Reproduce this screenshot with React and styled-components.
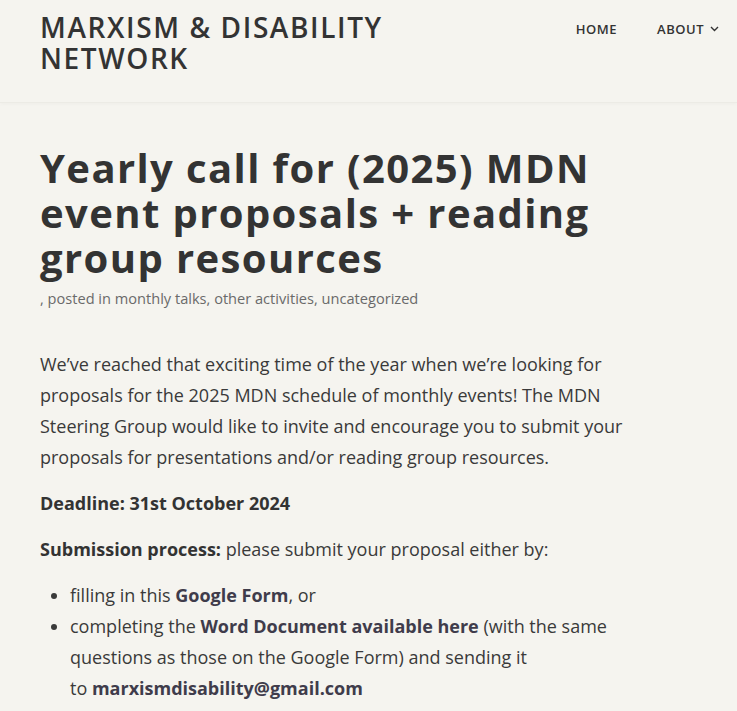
import React from "react";
import styled, { createGlobalStyle } from "styled-components";

const GlobalStyle = createGlobalStyle`
  html, body {
    margin: 0;
    padding: 0;
    background: #f5f4ef;
  }
  body {
    font-family: "Open Sans", "Liberation Sans", sans-serif;
    color: #333;
  }
`;

const Header = styled.header`
  display: flex;
  justify-content: space-between;
  align-items: flex-start;
  padding: 12px 18px 28px 40px;
  border-bottom: 1px solid #ecebe5;
  box-shadow: 0 1px 4px rgba(0, 0, 0, 0.03);
`;

const SiteTitle = styled.a`
  font-size: 28px;
  font-weight: 600;
  letter-spacing: 1.6px;
  line-height: 31px;
  text-transform: uppercase;
  color: #333;
  text-decoration: none;
  width: 380px;
`;

const Nav = styled.nav`
  display: flex;
  gap: 40px;
  padding-top: 8px;
`;

const NavItem = styled.a`
  display: flex;
  align-items: center;
  gap: 6px;
  font-size: 13px;
  font-weight: 600;
  letter-spacing: 0.5px;
  text-transform: uppercase;
  color: #333;
  text-decoration: none;
`;

const Main = styled.main`
  padding: 42px 40px 0 40px;
`;

const Title = styled.h1`
  margin: 0;
  font-size: 40px;
  font-weight: 700;
  line-height: 45px;
  letter-spacing: 1.4px;
  color: #333;
  max-width: 620px;
`;

const Meta = styled.div`
  margin-top: 8px;
  font-size: 14.6px;
  color: #6a6a6a;
`;

const Body = styled.div`
  margin-top: 41px;
  font-size: 18px;
  line-height: 31px;
  color: #3a3a3a;
  max-width: 620px;
`;

const Para = styled.p`
  margin: 0 0 15px;
`;

const Strong = styled.strong`
  font-weight: 700;
  color: ${(p) => (p.$link ? "#3f3c4b" : "#333")};
`;

const List = styled.ul`
  margin: 0;
  padding-left: 30px;
`;

const Item = styled.li`
  padding-left: 0;
`;

function Chevron() {
  return (
    <svg width="9" height="6" viewBox="0 0 9 6" fill="none">
      <path d="M1 1l3.5 3.5L8 1" stroke="#333" strokeWidth="1.4" />
    </svg>
  );
}

export default function App() {
  return (
    <>
      <GlobalStyle />
      <Header>
        <SiteTitle href="#">Marxism &amp; Disability Network</SiteTitle>
        <Nav>
          <NavItem href="#">Home</NavItem>
          <NavItem href="#">
            About <Chevron />
          </NavItem>
        </Nav>
      </Header>
      <Main>
        <Title>Yearly call for (2025) MDN event proposals + reading group resources</Title>
        <Meta>, posted in monthly talks, other activities, uncategorized</Meta>
        <Body>
          <Para>
            We’ve reached that exciting time of the year when we’re looking for proposals for the
            2025 MDN schedule of monthly events! The MDN Steering Group would like to invite and
            encourage you to submit your proposals for presentations and/or reading group
            resources.
          </Para>
          <Para>
            <Strong>Deadline: 31st October 2024</Strong>
          </Para>
          <Para>
            <Strong>Submission process:</Strong> please submit your proposal either by:
          </Para>
          <List>
            <Item>
              filling in this <Strong $link>Google Form</Strong>, or
            </Item>
            <Item>
              completing the <Strong $link>Word Document available here</Strong> (with the same
              questions as those on the Google Form) and sending it to&nbsp;
              <Strong $link>marxismdisability@gmail.com</Strong>
            </Item>
          </List>
        </Body>
      </Main>
    </>
  );
}
